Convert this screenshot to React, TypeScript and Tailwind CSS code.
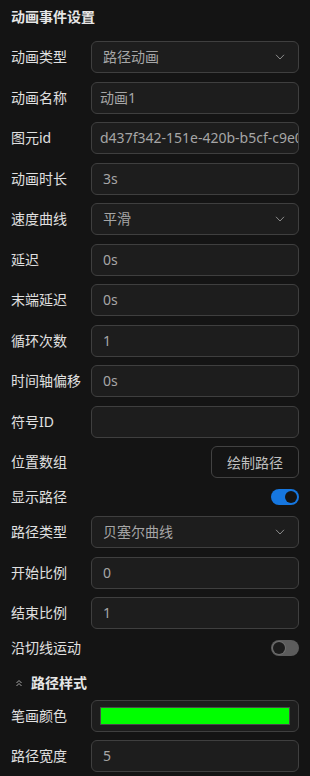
import React from "react";

const FONT = '"Noto Sans", "Noto Sans CJK SC", sans-serif';

type Row =
  | { kind: "select"; label: string; value: string }
  | { kind: "input"; label: string; value: string; tight?: boolean }
  | { kind: "button"; label: string; value: string }
  | { kind: "switch"; label: string; on: boolean }
  | { kind: "header"; label: string }
  | { kind: "color"; label: string; color: string };

const ROWS: Row[] = [
  { kind: "select", label: "动画类型", value: "路径动画" },
  { kind: "input", label: "动画名称", value: "动画1", tight: true },
  { kind: "input", label: "图元id", value: "d437f342-151e-420b-b5cf-c9e0a1b2c3d4", tight: true },
  { kind: "input", label: "动画时长", value: "3s" },
  { kind: "select", label: "速度曲线", value: "平滑" },
  { kind: "input", label: "延迟", value: "0s" },
  { kind: "input", label: "末端延迟", value: "0s" },
  { kind: "input", label: "循环次数", value: "1" },
  { kind: "input", label: "时间轴偏移", value: "0s" },
  { kind: "input", label: "符号ID", value: "" },
  { kind: "button", label: "位置数组", value: "绘制路径" },
  { kind: "switch", label: "显示路径", on: true },
  { kind: "select", label: "路径类型", value: "贝塞尔曲线" },
  { kind: "input", label: "开始比例", value: "0" },
  { kind: "input", label: "结束比例", value: "1" },
  { kind: "switch", label: "沿切线运动", on: false },
  { kind: "header", label: "路径样式" },
  { kind: "color", label: "笔画颜色", color: "#00ff00" },
  { kind: "input", label: "路径宽度", value: "5" },
];

export default function App() {
  return (
    <div
      className="h-[776px] w-[310px] overflow-hidden bg-[#141414] px-[11px] pt-[6px]"
      style={{ fontFamily: FONT }}
    >
      <h2 className="h-[22px] text-[14px] font-bold leading-[22px] text-[#e6e6e6]">
        动画事件设置
      </h2>
      <div className="mt-[13px] flex flex-col gap-[8.5px]">
        {ROWS.map((row) => (
          <FieldRow key={row.label} row={row} />
        ))}
      </div>
    </div>
  );
}

function FieldRow({ row }: { row: Row }) {
  if (row.kind === "header") {
    return (
      <div className="flex h-[24px] items-center gap-[8px] pl-[4px] pt-[8px]">
        <DoubleUp />
        <span className="text-[14px] font-bold leading-[16px] text-[#e6e6e6]">
          {row.label}
        </span>
      </div>
    );
  }

  if (row.kind === "switch") {
    return (
      <div className="flex h-[21px] items-center justify-between">
        <Label>{row.label}</Label>
        <Switch on={row.on} />
      </div>
    );
  }

  if (row.kind === "button") {
    return (
      <div className="flex h-[32px] items-center justify-between">
        <Label>{row.label}</Label>
        <button className="h-[32px] w-[88px] rounded-[6px] border border-[#424242] text-[14px] text-[#bfbfbf]">
          {row.value}
        </button>
      </div>
    );
  }

  return (
    <div className="flex h-[32px] items-center">
      <Label>{row.label}</Label>
      <div
        className={
          "flex h-[32px] min-w-0 flex-1 items-center overflow-hidden rounded-[6px] border border-[#3f3f3f] bg-[#1d1d1d] " +
          (row.kind === "color" ? "px-[8px]" : row.kind === "input" && row.tight ? "pl-[8px]" : "pl-[11px] pr-[13px]")
        }
      >
        {row.kind === "color" ? (
          <div
            className="h-[18px] w-full border border-[#4a4a4a]"
            style={{ backgroundColor: row.color }}
          />
        ) : (
          <>
            <span className="flex-1 whitespace-nowrap text-[14px] leading-[22px] text-[#a6a6a6]">
              {row.value}
            </span>
            {row.kind === "select" ? <ChevronDown /> : null}
          </>
        )}
      </div>
    </div>
  );
}

function Label({ children }: { children: React.ReactNode }) {
  return (
    <span className="w-[80px] shrink-0 whitespace-nowrap text-[14px] leading-[22px] text-[#e0e0e0]">
      {children}
    </span>
  );
}

function Switch({ on }: { on: boolean }) {
  return (
    <span
      className={
        "flex h-[16px] w-[28px] items-center rounded-full px-[2px] " +
        (on ? "justify-end bg-[#1677e0]" : "justify-start bg-[#5c5c5c]")
      }
    >
      <span
        className={
          "h-[12px] w-[12px] rounded-full " +
          (on ? "bg-[#141414]" : "bg-[#1c1c1c] ring-1 ring-[#6e6e6e]")
        }
      />
    </span>
  );
}

function ChevronDown() {
  return (
    <svg width="10" height="6" viewBox="0 0 10 6" fill="none" className="shrink-0">
      <path d="M1 0.8 L5 5 L9 0.8" stroke="#8c8c8c" strokeWidth="1" />
    </svg>
  );
}

function DoubleUp() {
  return (
    <svg width="8" height="8" viewBox="0 0 8 8" fill="none">
      <path d="M1.5 4 L4 1.5 L6.5 4" stroke="#a6a6a6" strokeWidth="1" />
      <path d="M1.5 7 L4 4.5 L6.5 7" stroke="#a6a6a6" strokeWidth="1" />
    </svg>
  );
}
